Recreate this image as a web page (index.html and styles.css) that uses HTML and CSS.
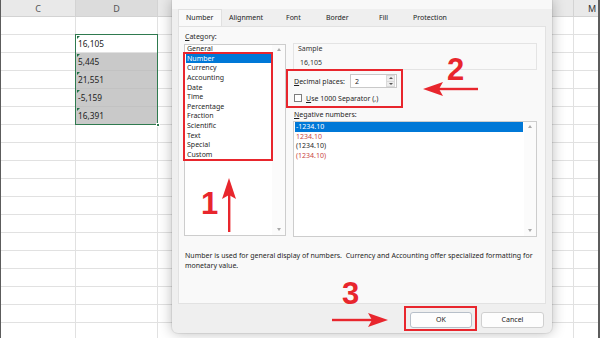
FILE: index.html
```html
<!DOCTYPE html>
<html>
<head>
<meta charset="utf-8">
<link rel="stylesheet" href="styles.css">
</head>
<body>
<div class="screen">
  <div class="sheet">
    <div class="row head">
      <div class="c col-c">C</div><div class="c col-d sel-head">D</div><div class="c col-mid"></div><div class="c col-m">M</div>
    </div>
    <div class="row"><div class="c col-c"></div><div class="c col-d"></div><div class="c col-mid"></div><div class="c col-m"></div></div>
    <div class="row"><div class="c col-c"></div><div class="c col-d num">16,105</div><div class="c col-mid"></div><div class="c col-m"></div></div>
    <div class="row"><div class="c col-c"></div><div class="c col-d num filled">5,445</div><div class="c col-mid"></div><div class="c col-m"></div></div>
    <div class="row"><div class="c col-c"></div><div class="c col-d num filled">21,551</div><div class="c col-mid"></div><div class="c col-m"></div></div>
    <div class="row"><div class="c col-c"></div><div class="c col-d num filled">-5,159</div><div class="c col-mid"></div><div class="c col-m"></div></div>
    <div class="row"><div class="c col-c"></div><div class="c col-d num filled">16,391</div><div class="c col-mid"></div><div class="c col-m"></div></div>
    <div class="row"><div class="c col-c"></div><div class="c col-d"></div><div class="c col-mid"></div><div class="c col-m"></div></div>
    <div class="row"><div class="c col-c"></div><div class="c col-d"></div><div class="c col-mid"></div><div class="c col-m"></div></div>
    <div class="row"><div class="c col-c"></div><div class="c col-d"></div><div class="c col-mid"></div><div class="c col-m"></div></div>
    <div class="row"><div class="c col-c"></div><div class="c col-d"></div><div class="c col-mid"></div><div class="c col-m"></div></div>
    <div class="row"><div class="c col-c"></div><div class="c col-d"></div><div class="c col-mid"></div><div class="c col-m"></div></div>
    <div class="row"><div class="c col-c"></div><div class="c col-d"></div><div class="c col-mid"></div><div class="c col-m"></div></div>
    <div class="row"><div class="c col-c"></div><div class="c col-d"></div><div class="c col-mid"></div><div class="c col-m"></div></div>
    <div class="row"><div class="c col-c"></div><div class="c col-d"></div><div class="c col-mid"></div><div class="c col-m"></div></div>
    <div class="row"><div class="c col-c"></div><div class="c col-d"></div><div class="c col-mid"></div><div class="c col-m"></div></div>
    <div class="row"><div class="c col-c"></div><div class="c col-d"></div><div class="c col-mid"></div><div class="c col-m"></div></div>
    <div class="row"><div class="c col-c"></div><div class="c col-d"></div><div class="c col-mid"></div><div class="c col-m"></div></div>
    <div class="row"><div class="c col-c"></div><div class="c col-d"></div><div class="c col-mid"></div><div class="c col-m"></div></div>
  </div>

  <div class="selection"><span class="handle"></span></div>

  <div class="dialog">
    <div class="titlebar"></div>
    <div class="dlg-body">
      <div class="tabs">
        <div class="tab on w1">Number</div>
        <div class="tab w2">Alignment</div>
        <div class="tab w3">Font</div>
        <div class="tab w4">Border</div>
        <div class="tab w5">Fill</div>
        <div class="tab w6">Protection</div>
      </div>
      <div class="panel">
        <div class="cols">
          <div class="left">
            <div class="lbl"><u>C</u>ategory:</div>
            <div class="list cat">
              <div class="items shift">
                <div class="it">General</div>
                <div class="it sel">Number</div>
                <div class="it">Currency</div>
                <div class="it">Accounting</div>
                <div class="it">Date</div>
                <div class="it">Time</div>
                <div class="it">Percentage</div>
                <div class="it">Fraction</div>
                <div class="it">Scientific</div>
                <div class="it">Text</div>
                <div class="it">Special</div>
                <div class="it">Custom</div>
              </div>
              <div class="scroll"><span class="up"></span><span class="down"></span></div>
            </div>
          </div>
          <div class="right">
            <div class="sample">
              <div class="s-title">Sample</div>
              <div class="s-val">16,105</div>
            </div>
            <div class="dec-row">
              <div class="dec-lbl"><u>D</u>ecimal places:</div>
              <div class="spin">
                <span class="spin-val">2</span>
                <span class="spin-btns"><span class="sb"><span class="up"></span></span><span class="sb"><span class="down"></span></span></span>
              </div>
            </div>
            <div class="chk-row">
              <span class="chk"></span><span><u>U</u>se 1000 Separator (,)</span>
            </div>
            <div class="lbl neg-lbl"><u>N</u>egative numbers:</div>
            <div class="list neg">
              <div class="items">
                <div class="it sel">-1234.10</div>
                <div class="it red">1234.10</div>
                <div class="it">(1234.10)</div>
                <div class="it red">(1234.10)</div>
              </div>
              <div class="scroll"><span class="up"></span><span class="down"></span></div>
            </div>
          </div>
        </div>
        <p class="desc">Number is used for general display of numbers.&nbsp; Currency and Accounting offer specialized formatting for monetary value.</p>
      </div>
      <div class="buttons">
        <div class="btn ok">OK</div>
        <div class="btn">Cancel</div>
      </div>
    </div>
  </div>

  <div class="annot">
    <div class="rbox b1"></div>
    <div class="rbox b2"></div>
    <div class="rbox b3"></div>
    <div class="digit d1">1</div>
    <div class="digit d2">2</div>
    <div class="digit d3">3</div>
    <svg class="arrows" width="600" height="338" viewBox="0 0 600 338">
      <g fill="#e8262d" stroke="none">
        <rect x="228" y="194" width="2.4" height="38"/>
        <polygon points="229,178 236,199 229,195 222,199"/>
        <rect x="438" y="87.8" width="40" height="2.4"/>
        <polygon points="423,89 443,82 439,89 443,96"/>
        <rect x="332" y="318.8" width="40" height="2.4"/>
        <polygon points="388,320 368,313 372,320 368,327"/>
      </g>
    </svg>
  </div>
</div>
</body>
</html>
```

FILE: styles.css
```css
* { box-sizing: border-box; }
html, body { margin: 0; padding: 0; background: #fff; }
body { font-family: "Noto Sans", "Open Sans", sans-serif; color: #1f1f1f; }

.screen { position: relative; width: 600px; height: 338px; overflow: hidden; }

/* spreadsheet */
.sheet { width: 600px; height: 338px; overflow: hidden; background: #fff;
  border-left: 1px solid #5c5c5c; border-right: 2px solid #5c5c5c; }
.row { display: flex; height: 18px; }
.row.head { height: 17px; background: #e9e9e9; }
.c { flex: none; height: 100%; border-right: 1px solid #e1e1e1; border-bottom: 1px solid #e1e1e1;
  font-size: 8.3px; color: #222; display: flex; align-items: center; }
.col-c { width: 75px; }
.col-d { width: 82px; }
.col-mid { width: 416px; }
.col-m { flex: 1; border-right: none; }
.head .c { justify-content: center; color: #555; border-color: #d3d3d3; font-size: 9px; }
.head .col-m { justify-content: flex-start; padding-left: 14px; color: #333; }
.head .sel-head { background: #dcdcdc; }
.num { position: relative; padding-left: 2px; }
.num::before { content: ""; position: absolute; left: 1px; top: 1px;
  border-top: 3px solid #1e7145; border-right: 3px solid transparent; }
.filled { background: #c9c9c9; border-bottom-color: #c2c2c2; }

.selection { position: absolute; left: 75px; top: 34px; width: 83px; height: 91px;
  border: 1px solid #2f7a4f; }
.handle { position: absolute; right: -3px; bottom: -3px; width: 4px; height: 4px;
  background: #2f7a4f; border: 1px solid #fff; }

/* dialog */
.dialog { position: absolute; left: 172px; top: 0; width: 380px; height: 333px;
  background: #efefef; border-radius: 0 0 6px 6px;
  box-shadow: 0 0 0 1px rgba(0,0,0,0.06), 0 0 14px rgba(0,0,0,0.28);
  font-size: 7px; color: #1f1f1f; }
.titlebar { height: 9px; background: #f8f8f8; }
.dlg-body { padding: 0 6px; }
.tabs { display: flex; height: 17px; }
.tab { height: 17px; line-height: 17px; padding-left: 7px; white-space: nowrap; color: #222; }
.tab.on { background: #f9f9f9; border: 1px solid #e0e0e0; border-bottom: none; padding-left: 7px; line-height: 15px; }
.w1 { width: 44px; } .w2 { width: 57px; } .w3 { width: 40px; } .w4 { width: 53px; } .w5 { width: 34px; } .w6 { width: 47px; }

.panel { height: 278px; background: #f9f9f9; border: 1px solid #e2e2e2; padding: 3px 8px 0 5px; }
.cols { display: grid; grid-template-columns: 102px 244px; column-gap: 7px; align-items: start; }
.lbl { height: 14px; line-height: 14px; padding-left: 1px; white-space: nowrap; }
.lbl u, .dec-lbl u, .chk-row u { text-decoration: underline; text-underline-offset: 1px; }

.list { display: flex; background: #fff; border: 1px solid #cdcdcd; overflow: hidden; }
.list.cat { height: 192px; }
.items { flex: 1; padding: 0 1px; }
.items.shift { margin-top: -1px; }
.it { height: 9.65px; line-height: 9.65px; padding-left: 1px; white-space: nowrap; }
.it.sel { background: #0078d7; color: #fff; }
.it.red { color: #c9453f; }
.scroll { flex: none; width: 13px; display: flex; flex-direction: column; justify-content: space-between;
  align-items: center; padding: 3px 0 4px; background: #fbfbfb; }
.neg .scroll { width: 12px; }
.up { display: block; width: 0; height: 0; border-left: 2.5px solid transparent; border-right: 2.5px solid transparent;
  border-bottom: 3px solid #a9a9a9; }
.down { display: block; width: 0; height: 0; border-left: 2.5px solid transparent; border-right: 2.5px solid transparent;
  border-top: 3px solid #a9a9a9; }

.right { padding-top: 13px; }
.sample { height: 27px; border: 1px solid #e4e4e4; padding: 0 0 0 4px; }
.s-title { height: 9px; line-height: 9px; color: #333; }
.s-val { height: 9px; line-height: 9px; margin-top: 5px; padding-left: 2px; color: #333; }

.dec-row { display: flex; align-items: center; height: 14px; margin-top: 4px; }
.dec-lbl { width: 57px; padding-left: 1px; white-space: nowrap; }
.spin { display: flex; align-items: center; width: 47px; height: 14px; background: #fff;
  border: 1px solid #c9c9c9; padding-left: 4px; }
.spin-val { flex: 1; }
.spin-btns { display: flex; flex-direction: column; width: 9px; height: 12px; margin-right: 1px; }
.sb { flex: 1; display: flex; align-items: center; justify-content: center; background: #ededed; border: 1px solid #dadada; }
.sb + .sb { border-top: none; }
.sb .up, .sb .down { border-left-width: 2px; border-right-width: 2px; }
.sb .up { border-bottom: 2px solid #555; }
.sb .down { border-top: 2px solid #555; }

.chk-row { display: flex; align-items: center; gap: 4px; height: 10px; margin-top: 5px; white-space: nowrap; }
.chk { display: block; width: 8px; height: 8px; margin-left: 1px; background: #fff; border: 1px solid #7d7d7d; }
.neg-lbl { height: 12px; line-height: 12px; margin-top: 6px; }
.list.neg { height: 116px; }

.desc { margin: 14px 0 0; padding-left: 1px; line-height: 10px; width: 360px; }

.buttons { display: flex; justify-content: flex-end; gap: 9px; padding-top: 8px; padding-right: 2px; }
.btn { height: 16px; line-height: 14px; width: 63px; text-align: center; background: #fdfdfd;
  border: 1px solid #d0d0d0; border-radius: 3px; color: #222; }
.btn.ok { width: 62px; border-color: #b7bfc9; }

/* annotations */
.annot { position: absolute; inset: 0; pointer-events: none; }
.rbox { position: absolute; border: 2px solid #e8262d; }
.b1 { left: 183px; top: 52px; width: 90px; height: 109px; }
.b2 { left: 286px; top: 69px; width: 117px; height: 39px; }
.b3 { left: 404px; top: 306px; width: 73px; height: 25px; }
.digit { position: absolute; font-family: "Liberation Sans", Arial, sans-serif; font-weight: bold;
  font-size: 31px; line-height: 31px; color: #e8262d; }
.d1 { left: 201px; top: 188px; }
.d2 { left: 447px; top: 54px; }
.d3 { left: 342px; top: 278px; }
.arrows { position: absolute; left: 0; top: 0; }
```
